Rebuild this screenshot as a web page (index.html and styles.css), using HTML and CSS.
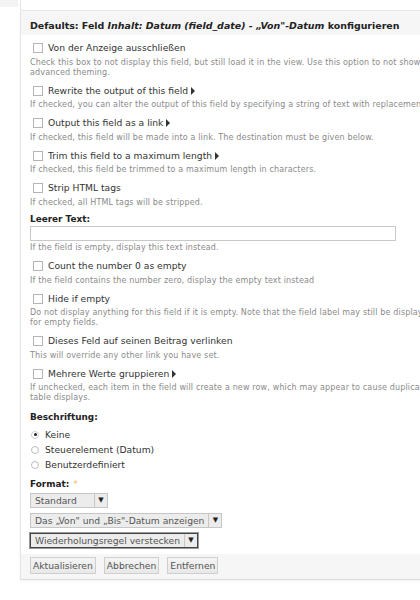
FILE: index.html
```html
<!DOCTYPE html>
<html lang="de">
<head>
  <meta charset="UTF-8">
  <meta name="viewport" content="width=device-width, initial-scale=1.0">
  <title>Feld konfigurieren</title>
  <link rel="stylesheet" href="styles.css">
</head>
<body>
  <div class="topbar">
    <div class="corner"></div>
  </div>

  <div class="panel">
    <div class="panel-title">
      Defaults: Feld <em>Inhalt: Datum (field_date) - „Von"-Datum</em> konfigurieren
    </div>

    <div class="panel-body">
      <div class="form-item">
        <label class="check"><span class="box"></span>Von der Anzeige ausschließen</label>
        <div class="desc">Check this box to not display this field, but still load it in the view. Use this option to not show a grouping field in each record, or when doing<br>advanced theming.</div>
      </div>

      <div class="form-item">
        <label class="check"><span class="box"></span>Rewrite the output of this field <span class="arrow"></span></label>
        <div class="desc">If checked, you can alter the output of this field by specifying a string of text with replacement tokens that can use any existing field output.</div>
      </div>

      <div class="form-item">
        <label class="check"><span class="box"></span>Output this field as a link <span class="arrow"></span></label>
        <div class="desc">If checked, this field will be made into a link. The destination must be given below.</div>
      </div>

      <div class="form-item">
        <label class="check"><span class="box"></span>Trim this field to a maximum length <span class="arrow"></span></label>
        <div class="desc">If checked, this field be trimmed to a maximum length in characters.</div>
      </div>

      <div class="form-item">
        <label class="check"><span class="box"></span>Strip HTML tags</label>
        <div class="desc">If checked, all HTML tags will be stripped.</div>
      </div>

      <div class="form-item text-item">
        <div class="title">Leerer Text:</div>
        <div class="textfield"></div>
        <div class="desc">If the field is empty, display this text instead.</div>
      </div>

      <div class="form-item">
        <label class="check"><span class="box"></span>Count the number 0 as empty</label>
        <div class="desc">If the field contains the number zero, display the empty text instead</div>
      </div>

      <div class="form-item">
        <label class="check"><span class="box"></span>Hide if empty</label>
        <div class="desc">Do not display anything for this field if it is empty. Note that the field label may still be displayed. Check style or row style settings to hide labels<br>for empty fields.</div>
      </div>

      <div class="form-item">
        <label class="check"><span class="box"></span>Dieses Feld auf seinen Beitrag verlinken</label>
        <div class="desc">This will override any other link you have set.</div>
      </div>

      <div class="form-item">
        <label class="check"><span class="box"></span>Mehrere Werte gruppieren <span class="arrow"></span></label>
        <div class="desc">If unchecked, each item in the field will create a new row, which may appear to cause duplicates. This setting is not compatible with click-sorting in<br>table displays.</div>
      </div>

      <div class="form-item radio-item">
        <div class="title">Beschriftung:</div>
        <div class="radios">
          <label class="radio"><span class="dot checked"></span>Keine</label>
          <label class="radio"><span class="dot"></span>Steuerelement (Datum)</label>
          <label class="radio"><span class="dot"></span>Benutzerdefiniert</label>
        </div>
      </div>

      <div class="form-item selects">
        <div class="title">Format: <span class="required">*</span></div>
        <div class="select w-standard"><span class="value">Standard</span><span class="caret">▼</span></div>
        <div class="select"><span class="value">Das „Von" und „Bis"-Datum anzeigen</span><span class="caret">▼</span></div>
        <div class="select focused"><span class="value">Wiederholungsregel verstecken</span><span class="caret">▼</span></div>
      </div>
    </div>

    <div class="panel-buttons">
      <button class="btn">Aktualisieren</button>
      <button class="btn">Abbrechen</button>
      <button class="btn">Entfernen</button>
    </div>
  </div>
</body>
</html>
```

FILE: styles.css
```css
html, body {
  overflow: hidden;
}

body {
  font-family: 'DejaVu Sans', 'Verdana', sans-serif;
  background-color: #fff;
  color: #333;
  margin: 0;
  padding: 0;
  width: 420px;
  height: 600px;
}

.topbar {
  height: 10px;
  margin-left: 20px;
  border-left: 1px solid #e4e4e4;
  border-bottom: 1px solid #e8e8e8;
  position: relative;
}

.topbar .corner {
  position: absolute;
  left: -21px;
  top: 0;
  width: 18px;
  height: 7px;
  background-color: #f3f3f3;
}

.panel {
  margin-left: 20px;
  width: 1000px;
  border-left: 1px solid #e4e4e4;
  border-bottom: 1px solid #dcdcdc;
  box-shadow: 0 1px 2px rgba(0, 0, 0, 0.06);
}

.panel-title {
  background-color: #f6f6f6;
  padding: 8px 9px 3px;
  font-size: 9.45px;
  line-height: 13px;
  font-weight: bold;
  color: #222;
  white-space: nowrap;
}

.panel-title em {
  font-style: italic;
}

.panel-body {
  padding: 6px 9px 0;
}

.form-item {
  margin-bottom: 6px;
}

.check,
.radio {
  display: flex;
  align-items: center;
  font-size: 9.2px;
  line-height: 14px;
  color: #333;
  white-space: nowrap;
}

.box {
  width: 8px;
  height: 8px;
  border: 1px solid #b4b4b4;
  background: #fff;
  margin: 0 5px 0 3px;
  flex-shrink: 0;
}

.arrow {
  display: inline-block;
  width: 0;
  height: 0;
  border-top: 4px solid transparent;
  border-bottom: 4px solid transparent;
  border-left: 4px solid #333;
  margin-left: 3px;
}

.desc {
  font-size: 8px;
  line-height: 10px;
  color: #8a8a8a;
  margin-top: 2.5px;
  white-space: nowrap;
  letter-spacing: 0.15px;
}

.title {
  font-size: 8.9px;
  line-height: 13px;
  font-weight: bold;
  color: #222;
}

.text-item {
  margin-top: -1px;
}

.textfield {
  width: 364px;
  height: 13px;
  border: 1px solid #c8c8c8;
  background: #fff;
}

/* margin has to beat the 6px bottom margin of the item above (they collapse) */
.radio-item {
  margin-top: 8px;
}

.radios {
  margin-top: 3px;
}

.radio {
  line-height: 15px;
}

.dot {
  width: 6px;
  height: 6px;
  border: 1px solid #bdbdbd;
  border-radius: 50%;
  background: #fff;
  margin: 0 6px 0 1px;
  position: relative;
  flex-shrink: 0;
}

.dot.checked {
  border-color: #cfcfcf;
}

.dot.checked::after {
  content: "";
  position: absolute;
  left: 1.5px;
  top: 1.5px;
  width: 3px;
  height: 3px;
  border-radius: 50%;
  background: #222;
}

.required {
  color: #f7b860;
  font-weight: normal;
  font-size: 9px;
  vertical-align: top;
  margin-left: 1px;
}

.selects .select {
  margin-top: 2px;
}

.selects .select + .select {
  margin-top: 5px;
}

.select {
  display: flex;
  width: fit-content;
  height: 13px;
  border: 1px solid #c6c6c6;
  background-color: #ececec;
  font-size: 9.2px;
  line-height: 13px;
  color: #555;
}

.select .value {
  padding: 0 4px;
  white-space: nowrap;
}

.w-standard .value {
  width: 55px;
}

.select .caret {
  border-left: 1px solid #c6c6c6;
  width: 12px;
  text-align: center;
  font-size: 7px;
  color: #222;
}

.select.focused {
  border: 1px solid #444;
  box-shadow: 0 0 0 1px #9a9a9a;
}

.panel-buttons {
  background-color: #f6f6f6;
  padding: 3px 9px 5px;
  display: flex;
  gap: 8px;
}

.btn {
  font-family: 'DejaVu Sans', 'Verdana', sans-serif;
  font-size: 9.2px;
  color: #555;
  background: linear-gradient(#f4f4f4, #e8e8e8);
  border: 1px solid #cfcfcf;
  border-radius: 0;
  padding: 0 2px;
  height: 17px;
  line-height: 15px;
}
```
